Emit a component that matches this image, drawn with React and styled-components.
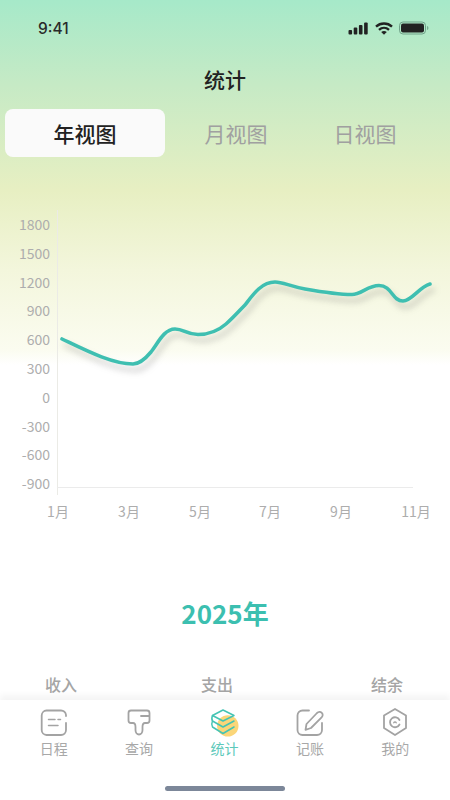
import React from 'react';
import styled, { createGlobalStyle } from 'styled-components';

const GlobalStyle = createGlobalStyle`
  html, body {
    margin: 0;
    padding: 0;
    background: #fff;
  }
  * {
    box-sizing: border-box;
  }
`;

const Page = styled.div`
  position: relative;
  width: 450px;
  height: 800px;
  overflow: hidden;
  font-family: "Noto Sans CJK SC", "Noto Sans", sans-serif;
  background: linear-gradient(180deg, #a6e9c9 0, #c6eac5 85px, #e7efc2 190px, #f3f6dc 270px, #fbfcf0 350px, #fff 365px, #fff 100%);
`;

const StatusBar = styled.div`
  display: flex;
  justify-content: space-between;
  align-items: center;
  height: 56px;
  padding: 0 21px 0 38px;
`;

const Time = styled.span`
  font-family: Inter, "Liberation Sans", sans-serif;
  font-size: 15.5px;
  font-weight: 500;
  color: #2a2a2a;
`;

const StatusIcons = styled.div`
  display: flex;
  align-items: center;
  gap: 6px;
`;

const Title = styled.h1`
  margin: 0;
  height: 50px;
  line-height: 46px;
  text-align: center;
  font-size: 21px;
  font-weight: 500;
  color: #222;
`;

const Tabs = styled.div`
  display: grid;
  grid-template-columns: 160px 142px 116px;
  height: 48px;
  margin: 3px 0 0 5px;
`;

const Tab = styled.div`
  display: flex;
  align-items: center;
  justify-content: center;
  border-radius: 8px;
  font-size: 21px;
  font-weight: ${p => (p.$active ? 500 : 400)};
  color: ${p => (p.$active ? '#222' : '#a0a0a0')};
  background: ${p => (p.$active ? '#fafafa' : 'transparent')};
`;

const Chart = styled.svg`
  display: block;
  width: 450px;
  height: 325px;
  margin-top: 48px;
`;

const AxisLabel = styled.text`
  font-size: 14px;
  fill: #adadad;
`;

const Line = styled.path`
  fill: none;
  stroke: #3fbfb1;
  stroke-width: 3.6px;
  stroke-linecap: round;
  filter: drop-shadow(3px 6px 3px rgba(90, 90, 90, 0.3));
`;

const Year = styled.div`
  margin-top: 63px;
  text-align: center;
  font-size: 26px;
  line-height: 40px;
  font-weight: 700;
  color: #3cbfb0;
`;

const Summary = styled.div`
  display: grid;
  grid-template-columns: 156px 170px 36px;
  margin-top: 39px;
  padding-left: 45px;
`;

const SummaryLabel = styled.span`
  font-size: 16px;
  font-weight: 500;
  line-height: 24px;
  color: #a5a5a5;
`;

const TabBar = styled.nav`
  position: absolute;
  left: 0;
  right: 0;
  bottom: 0;
  height: 100px;
  padding: 7px 12px 0 11px;
  display: grid;
  grid-template-columns: repeat(5, 1fr);
  align-items: start;
  background: #fff;
  box-shadow: 0 -5px 6px rgba(0, 0, 0, 0.045);
`;

const NavItem = styled.div`
  display: flex;
  flex-direction: column;
  align-items: center;
  font-size: 14px;
  line-height: 20px;
  color: ${p => (p.$active ? '#5cc9ba' : '#a8a8a8')};
`;

const NavIcon = styled.svg`
  display: block;
  width: 32px;
  height: 32px;
  margin-bottom: -1px;
  fill: none;
  stroke: ${p => (p.$active ? '#45c4b4' : '#a3a3a3')};
  stroke-width: ${p => (p.$active ? 1.5 : 1.8)};
  stroke-linecap: round;
  stroke-linejoin: round;
`;

const HomeIndicator = styled.div`
  position: absolute;
  left: 165px;
  bottom: 9px;
  width: 120px;
  height: 5px;
  border-radius: 3px;
  background: #7c8799;
`;

const yLabels = [1800, 1500, 1200, 900, 600, 300, 0, -300, -600, -900];
const xLabels = [
  ['1月', 58],
  ['3月', 129],
  ['5月', 200],
  ['7月', 270],
  ['9月', 341],
  ['11月', 416],
];

const linePath =
  'M62 339 C85 350 112 364 133 364 C140 364 146 358 151 352 C158 343 164 329 175 329 ' +
  'C184 329 186 334.5 198 334.5 C210 334.5 218 331 226 324 C233 318 240 310 245 305 ' +
  'C252 296 261 282 275 282 C283 282 289 286 305 289 C322 292 338 294.5 352 294.5 ' +
  'C361 294.5 368 285.5 379 285.5 C392 285.5 392 301 403 301 C412 301 419 287 430 284';

function LineChart() {
  return (
    <Chart viewBox="0 205 450 325">
      <line x1="57.5" y1="210" x2="57.5" y2="495" stroke="#ebebe6" />
      <line x1="57" y1="487.5" x2="413" y2="487.5" stroke="#ebebeb" />
      {yLabels.map((v, i) => (
        <AxisLabel key={v} x="50" y={230 + i * 28.8} textAnchor="end">
          {v}
        </AxisLabel>
      ))}
      {xLabels.map(([t, x]) => (
        <AxisLabel key={t} x={x} y="517" textAnchor="middle">
          {t}
        </AxisLabel>
      ))}
      <Line d={linePath} />
    </Chart>
  );
}

function SignalIcons() {
  return (
    <StatusIcons>
      <svg width="21" height="13" viewBox="0 0 21 13" fill="#222">
        <rect x="0.5" y="8" width="3.6" height="4.5" rx="1" />
        <rect x="5.7" y="5.5" width="3.6" height="7" rx="1" />
        <rect x="10.9" y="3" width="3.6" height="9.5" rx="1" />
        <rect x="16.1" y="0.5" width="3.6" height="12" rx="1" />
      </svg>
      <svg width="18" height="13" viewBox="0 0 18 13" fill="none" stroke="#222" strokeWidth="2.4">
        <path d="M1 4.6 C5.6 0.4 12.4 0.4 17 4.6" />
        <path d="M4 7.8 C6.9 5.2 11.1 5.2 14 7.8" />
        <path d="M9 12.8 L6.2 10 C8 8.800 10 8.800 11.800 10 Z" fill="#222" stroke="none" />
      </svg>
      <svg width="30" height="14" viewBox="0 0 30 14" fill="none">
        <rect x="0.5" y="1" width="26" height="12" rx="3.5" stroke="#5f8f78" strokeOpacity="0.8" />
        <rect x="2" y="2.5" width="23" height="9" rx="2" fill="#222" />
        <path d="M28 5 C29 5.4 29.4 6 29.4 7 C29.4 8 29 8.6 28 9 Z" fill="#5f8f78" fillOpacity="0.7" />
      </svg>
    </StatusIcons>
  );
}

function ScheduleIcon() {
  return (
    <NavIcon viewBox="0 0 32 32">
      <path d="M28 9 V8 A5 5 0 0 0 23 3.500 H8.500 A5 5 0 0 0 3.700 8.500 V23 A5 5 0 0 0 8.500 28 H23 A5 5 0 0 0 28 23 V16" />
      <path d="M10.500 12.500 H17 M20 12.500 H22.500 M10.500 18.500 H20" strokeWidth="1.500" />
    </NavIcon>
  );
}

function SearchIcon() {
  return (
    <NavIcon viewBox="0 0 32 32">
      <path d="M24 3.500 H8 A2.500 2.500 0 0 0 5.500 6 V13.500 A2.500 2.500 0 0 0 8 16 H10 C12 16 12.500 18 12.500 20 V23 C12.500 25.500 14 27.500 16 27.500 C18 27.500 19.500 25.500 19.500 23 V20 C19.500 18 20 16 22 16 H24 A2.500 2.500 0 0 0 26.500 13.500 V6 A2.500 2.500 0 0 0 24 3.500 Z" />
      <path d="M18 9 H26" />
    </NavIcon>
  );
}

function StatsIcon() {
  return (
    <NavIcon $active viewBox="0 0 32 32">
      <circle cx="19.800" cy="18.900" r="10.700" fill="#fbd679" stroke="none" />
      <path d="M15 3 L26 8.500 L15 14 L4.500 8.500 Z" />
      <path d="M4.500 8.500 C3.500 11 3.500 12.500 4.500 14 L15 20 L26 14" />
      <path d="M4.500 14 C3.500 16 3.500 18 4.500 20 L15 26.500 L26 20" />
    </NavIcon>
  );
}

function RecordIcon() {
  return (
    <NavIcon viewBox="0 0 32 32">
      <path d="M15 3.500 H8.500 A5 5 0 0 0 3.500 8.500 V23 A5 5 0 0 0 8.500 28 H23 A5 5 0 0 0 28 23 V16" />
      <path d="M11.500 22.800 L12.500 17 L23 6 C24.500 4.500 26.500 4.500 27.800 5.800 C29 7 29 9 27.600 10.400 L17 21 Z" />
    </NavIcon>
  );
}

function ProfileIcon() {
  return (
    <NavIcon viewBox="0 0 32 32">
      <path d="M16 2 L27 8.500 V21 L16 28 L5 21 V8.500 Z" />
      <path d="M20.500 17.500 A5 5 0 1 1 20.500 13" />
      <path d="M17.200 15.800 A1.300 1.300 0 0 0 14.800 15.800" strokeWidth="1.400" />
    </NavIcon>
  );
}

const navItems = [
  { label: '日程', Icon: ScheduleIcon },
  { label: '查询', Icon: SearchIcon },
  { label: '统计', Icon: StatsIcon, active: true },
  { label: '记账', Icon: RecordIcon },
  { label: '我的', Icon: ProfileIcon },
];

export default function App() {
  return (
    <Page>
      <GlobalStyle />
      <StatusBar>
        <Time>9:41</Time>
        <SignalIcons />
      </StatusBar>
      <Title>统计</Title>
      <Tabs>
        <Tab $active>年视图</Tab>
        <Tab>月视图</Tab>
        <Tab>日视图</Tab>
      </Tabs>
      <LineChart />
      <Year>2025年</Year>
      <Summary>
        <SummaryLabel>收入</SummaryLabel>
        <SummaryLabel>支出</SummaryLabel>
        <SummaryLabel>结余</SummaryLabel>
      </Summary>
      <TabBar>
        {navItems.map(({ label, Icon, active }) => (
          <NavItem key={label} $active={active}>
            <Icon />
            {label}
          </NavItem>
        ))}
        <HomeIndicator />
      </TabBar>
    </Page>
  );
}
